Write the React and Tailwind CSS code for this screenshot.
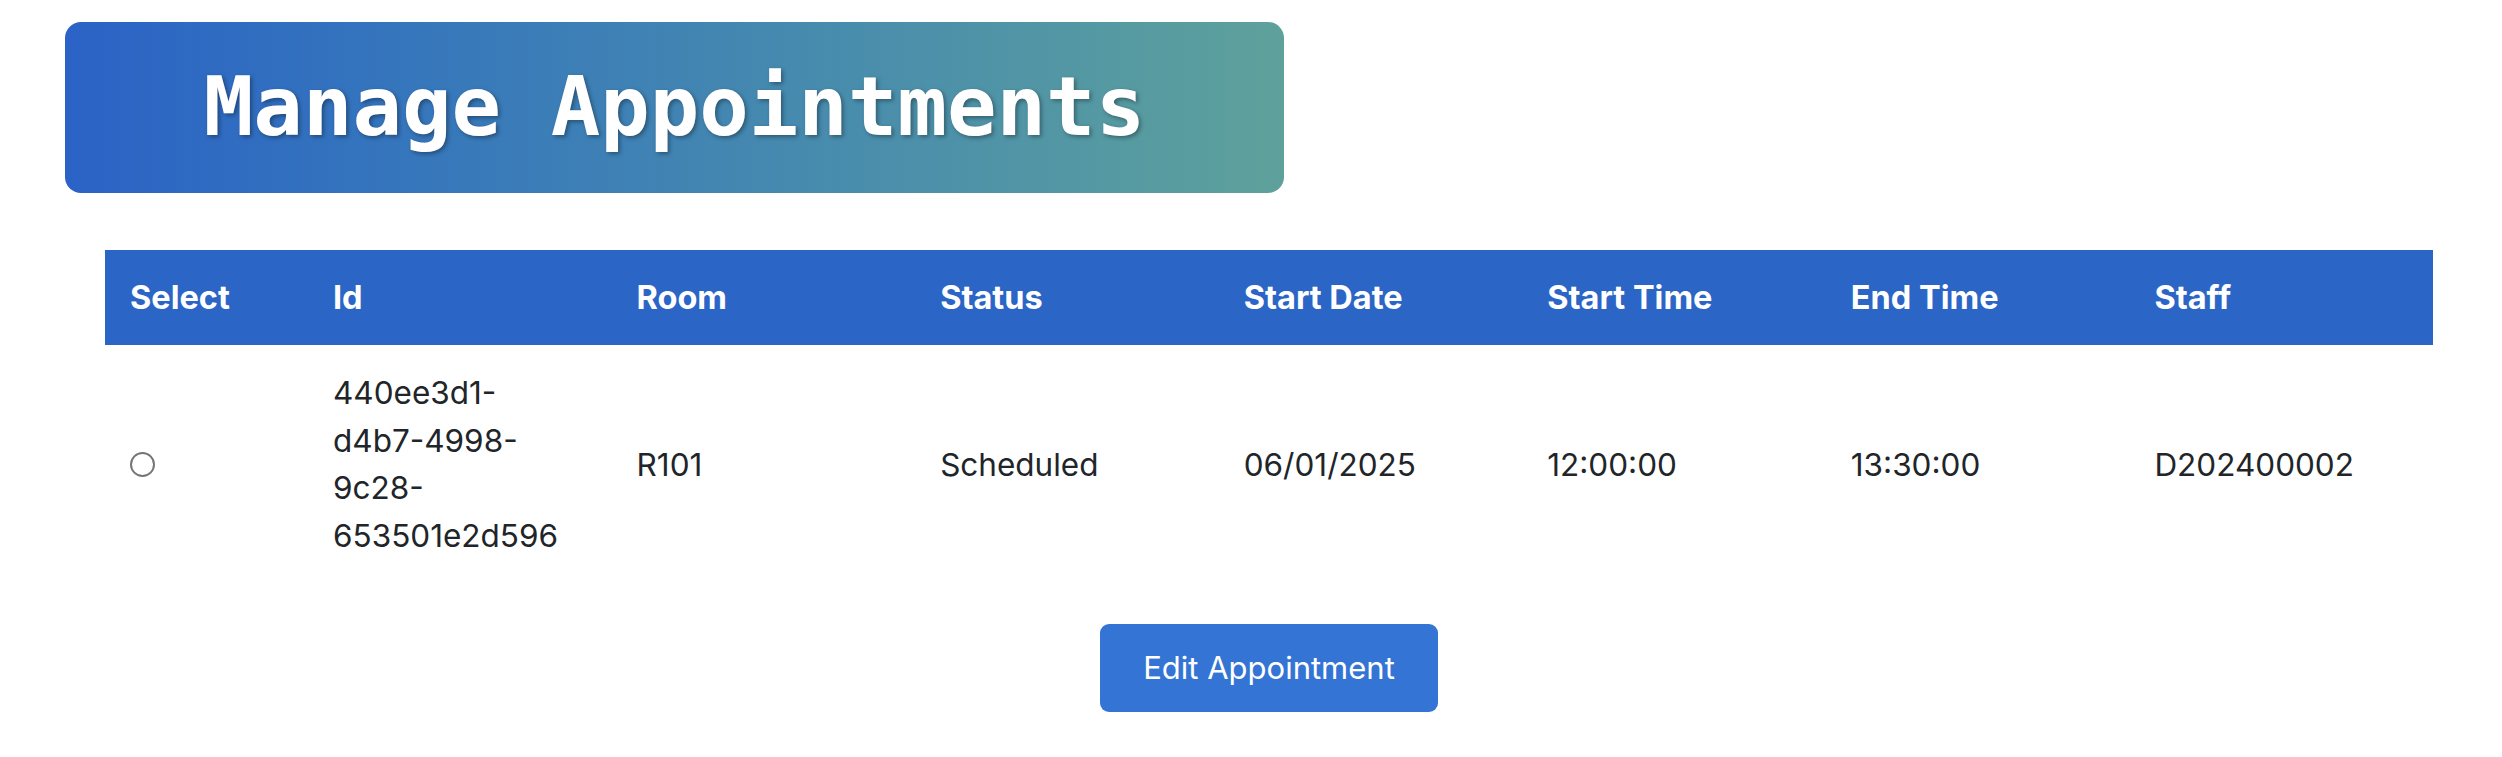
import React from "react";

const headers = ["Select", "Id", "Room", "Status", "Start Date", "Start Time", "End Time", "Staff"];

export default function App() {
  return (
    <div className="min-h-screen bg-white pt-[22px] text-[#212529]" style={{ fontFamily: "Inter, 'Noto Sans', sans-serif" }}>
      <div className="ml-[65px] flex h-[171px] w-[1219px] items-center justify-center rounded-[16px] bg-gradient-to-r from-[#2b62c6] to-[#5ea19b]">
        <h1
          className="text-[82.3px] font-bold leading-none text-white [text-shadow:2px_2px_4px_rgba(0,0,0,0.35)]"
          style={{ fontFamily: "'DejaVu Sans Mono', monospace" }}
        >
          Manage Appointments
        </h1>
      </div>

      <div className="ml-[105px] mt-[57px] w-[2328px]">
        <table className="w-full table-fixed border-collapse text-[31.5px] leading-[47.4px]">
          <colgroup>
            <col className="w-[203px]" />
            <col />
            <col />
            <col />
            <col />
            <col />
            <col />
            <col />
          </colgroup>
          <thead>
            <tr className="bg-[#2b65c6] text-white">
              {headers.map((h) => (
                <th key={h} className="px-[25px] py-[24px] text-left text-[32.5px] font-bold">
                  {h}
                </th>
              ))}
            </tr>
          </thead>
          <tbody>
            <tr>
              <td className="px-[25px] py-[24px] align-middle">
                <span className="block h-[25px] w-[25px] rounded-full border-2 border-[#767676] bg-white" />
              </td>
              <td className="px-[25px] py-[24px] align-middle">
                440ee3d1-
                <br />
                d4b7-4998-
                <br />
                9c28-
                <br />
                653501e2d596
              </td>
              <td className="px-[25px] py-[24px] align-middle">R101</td>
              <td className="px-[25px] py-[24px] align-middle">Scheduled</td>
              <td className="px-[25px] py-[24px] align-middle">06/01/2025</td>
              <td className="px-[25px] py-[24px] align-middle">12:00:00</td>
              <td className="px-[25px] py-[24px] align-middle">13:30:00</td>
              <td className="px-[25px] py-[24px] align-middle">D202400002</td>
            </tr>
          </tbody>
        </table>

        <div className="mt-[41px] flex justify-center">
          <button className="flex h-[88px] w-[338px] items-center justify-center rounded-[9px] bg-[#3474d4] text-[31px] text-white">
            Edit Appointment
          </button>
        </div>
      </div>
    </div>
  );
}
